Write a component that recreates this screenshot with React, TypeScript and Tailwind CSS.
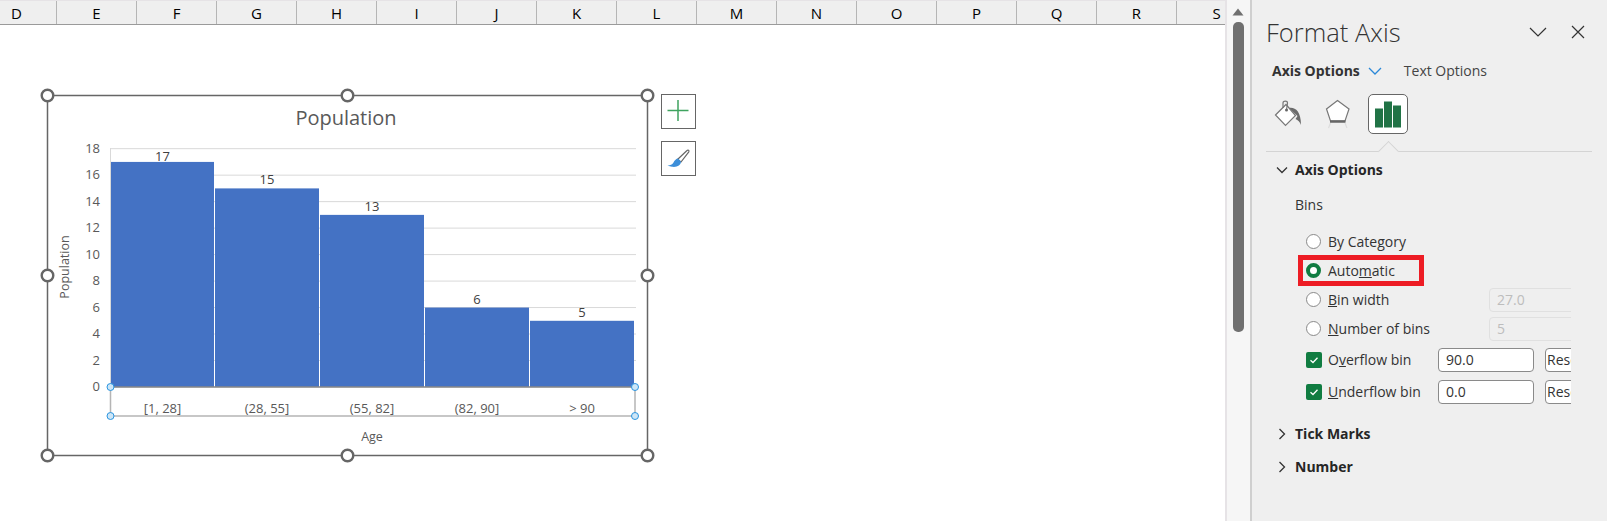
const columns = ["D", "E", "F", "G", "H", "I", "J", "K", "L", "M", "N", "O", "P", "Q", "R", "S"];

const baseY = 387;
const unit = 13.24;
const bars = [
  { x: 111, w: 103, value: 17, label: "[1, 28]" },
  { x: 215, w: 104, value: 15, label: "(28, 55]" },
  { x: 320, w: 104, value: 13, label: "(55, 82]" },
  { x: 425, w: 104, value: 6, label: "(82, 90]" },
  { x: 530, w: 104, value: 5, label: "> 90" },
];
const ticks = [0, 2, 4, 6, 8, 10, 12, 14, 16, 18];
const handles = [
  [47.5, 95.5], [347.5, 95.5], [647.5, 95.5],
  [47.5, 275.5], [647.5, 275.5],
  [47.5, 455.5], [347.5, 455.5], [647.5, 455.5],
];
const axisHandles = [
  [110.5, 387], [635, 387], [110.5, 416], [635, 416],
];

function Chart() {
  return (
    <svg
      width="620"
      height="380"
      viewBox="38 85 620 380"
      className="shrink-0"
      style={{ fontFamily: '"Open Sans", sans-serif' }}
    >
      <rect x="47.5" y="95.5" width="600" height="360" fill="#fff" stroke="#666" strokeWidth="1.5" />
      <text x="346" y="125" textAnchor="middle" fontSize="20" fill="#595959">Population</text>

      {ticks.map((t) => (
        <g key={t}>
          <line x1="110" x2="636" y1={baseY - t * unit} y2={baseY - t * unit} stroke="#d9d9d9" strokeWidth="1" />
          <text x="100" y={baseY - t * unit + 4} textAnchor="end" fontSize="13" fill="#595959">{t}</text>
        </g>
      ))}
      <line x1="110.5" x2="110.5" y1="148" y2="387" stroke="#d9d9d9" />

      {bars.map((b) => (
        <g key={b.label}>
          <rect x={b.x} y={baseY - b.value * unit} width={b.w} height={b.value * unit} fill="#4472c4" />
          <text x={b.x + b.w / 2} y={Math.max(baseY - b.value * unit - 4, 160.9)} textAnchor="middle" fontSize="13" fill="#404040">{b.value}</text>
          <text x={b.x + b.w / 2} y="413" textAnchor="middle" fontSize="13" fill="#595959">{b.label}</text>
        </g>
      ))}

      <line x1="110" x2="635" y1="387" y2="387" stroke="#888" strokeWidth="1.5" />
      <path d="M110.5 387V416H635V387" fill="none" stroke="#b5b5b5" strokeWidth="1.5" />
      {axisHandles.map(([x, y]) => (
        <circle key={`${x}-${y}`} cx={x} cy={y} r="3.5" fill="#cde6f7" stroke="#2b95e0" strokeWidth="1" />
      ))}

      <text x="372" y="441" textAnchor="middle" fontSize="12.5" fill="#595959">Age</text>
      <text transform="translate(69 267) rotate(-90)" textAnchor="middle" fontSize="12.5" fill="#595959">Population</text>

      {handles.map(([x, y]) => (
        <circle key={`${x}-${y}`} cx={x} cy={y} r="5.8" fill="#fff" stroke="#666" strokeWidth="2.4" />
      ))}
    </svg>
  );
}

function ChartButtons() {
  return (
    <div className="ml-[3px] mt-[9px] flex flex-col gap-[12px]">
      <div className="h-[35px] w-[35px] border border-[#666] bg-white">
        <svg width="33" height="33" viewBox="0 0 33 33">
          <path d="M5.5 15.5H26.5M16 5V26" stroke="#3fa35f" strokeWidth="1.5" fill="none" />
        </svg>
      </div>
      <div className="h-[35px] w-[35px] border border-[#666] bg-white">
        <svg width="33" height="33" viewBox="0 0 33 33">
          <path d="M25 8.5C26 7.5 27.5 8.500 26.800 9.800L19 20L15.500 17.500Z" fill="#fff" stroke="#666" strokeWidth="1.2" />
          <path d="M15.500 16.500C17 17 18.500 18.500 19 20C18.500 23 15.500 25.500 10 24.800C8.500 24.600 7 24.300 5.500 23.500C8.500 23.500 10 22.800 11.500 20.500C12.500 18.500 14 17 15.500 16.500Z" fill="#3d8fd9" />
        </svg>
      </div>
    </div>
  );
}

function Radio({ checked, label }: { checked?: boolean; label: React.ReactNode }) {
  return (
    <div className="flex h-[29px] items-center">
      {checked ? (
        <span className="h-[15px] w-[15px] rounded-full border-[4px] border-[#107c41] bg-white" />
      ) : (
        <span className="h-[15px] w-[15px] rounded-full border border-[#8a8a8a] bg-white" />
      )}
      <span className="ml-[7px] text-[#333]">{label}</span>
    </div>
  );
}

function BinRow({ label, value }: { label: React.ReactNode; value: string }) {
  return (
    <div className="flex h-[32px] items-center">
      <span className="flex h-[16px] w-[16px] items-center justify-center rounded-[2px] bg-[#107c41]">
        <svg width="12" height="12" viewBox="0 0 12 12">
          <path d="M2.500 6.200L5 8.500L9.500 3.800" fill="none" stroke="#fff" strokeWidth="1.300" />
        </svg>
      </span>
      <span className="ml-[6px] w-[110px] text-[#333]">{label}</span>
      <div className="flex h-[24px] w-[96px] items-center rounded-[4px] border border-[#8a8a8a] bg-white pl-[7px] text-[#333]">
        {value}
      </div>
      <div className="ml-[11px] flex h-[24px] w-[60px] shrink-0 items-center rounded-[4px] border border-[#8a8a8a] bg-white pl-[1px] text-[#333]">
        Reset
      </div>
    </div>
  );
}

function DisabledInput({ value }: { value: string }) {
  return (
    <div className="flex h-[24px] w-[120px] shrink-0 items-center rounded-[4px] border border-[#e0e0e0] pl-[7px] text-[#bdbdbd]">
      {value}
    </div>
  );
}

function PanelIcons() {
  return (
    <div className="ml-[16px] mt-[13px] flex gap-[10px]">
      <div className="h-[40px] w-[40px]">
        <svg width="40" height="40" viewBox="0 0 40 40">
          <path d="M21 14C27 13 33 17 33 31C32 28 30 26 27.500 25L29.500 22Z" fill="#6b6b6b" />
          <path d="M7.500 21L18 10.500L27.500 21.500L17.500 31.500Z" fill="#fff" stroke="#777" strokeWidth="1.200" />
          <path d="M15 14V9C15 6.500 19.500 6.500 19.500 9L18.500 16" fill="none" stroke="#777" strokeWidth="1.200" />
          <circle cx="18.500" cy="16" r="1.500" fill="#666" />
        </svg>
      </div>
      <div className="h-[40px] w-[40px]">
        <svg width="40" height="40" viewBox="0 0 40 40">
          <path d="M19.500 6.500L31 15L27 27H12.500L8.500 15Z" fill="#fff" stroke="#777" strokeWidth="1.200" />
          <path d="M12 27.500H27.500" stroke="#666" strokeWidth="2.500" />
          <path d="M12.500 29L10.500 34M27 29L29 34" stroke="#ddd" strokeWidth="1.200" />
        </svg>
      </div>
      <div className="h-[40px] w-[40px] rounded-[5px] border border-[#666] bg-white">
        <svg width="38" height="38" viewBox="0 0 38 38">
          <path d="M6 13.500H14V32.500H6ZM15 6.500H23V32.500H15ZM24 10.500H32V32.500H24Z" fill="#217346" />
        </svg>
      </div>
    </div>
  );
}

function SectionHead({ open, title }: { open?: boolean; title: string }) {
  return (
    <div className="flex items-center">
      <svg width="12" height="12" viewBox="0 0 12 12" className="ml-[24px]">
        {open ? (
          <path d="M1 3.500L6 8.500L11 3.500" fill="none" stroke="#333" strokeWidth="1.300" />
        ) : (
          <path d="M3.500 1L8.500 6L3.500 11" fill="none" stroke="#333" strokeWidth="1.300" />
        )}
      </svg>
      <span className="ml-[7px] font-bold text-[#262626]">{title}</span>
    </div>
  );
}

export default function App() {
  return (
    <div
      className="flex h-[521px] w-[1607px] overflow-hidden bg-white text-[14px] leading-[20px]"
      style={{ fontFamily: '"Open Sans", sans-serif' }}
    >
      {/* Sheet */}
      <div className="w-[1225px] shrink-0 overflow-hidden">
        <div className="-ml-[23px] flex h-[25px] border-b border-t border-b-[#9a9a9a] border-t-[#e6e3e6] bg-[#efefef]">
          {columns.map((c) => (
            <div
              key={c}
              className="flex w-[80px] shrink-0 items-center justify-center border-r border-[#b5b5b5] text-[15px] text-black"
            >
              {c}
            </div>
          ))}
        </div>
        <div className="ml-[38px] mt-[60px] flex items-start">
          <Chart />
          <ChartButtons />
        </div>
      </div>

      {/* Scrollbar */}
      <div className="flex w-[27px] shrink-0 flex-col items-center border-x-2 border-l-[#e6e3e6] border-r-[#cfcfcf] bg-[#f6f6f6] pr-[1px] pt-[8px]">
        <svg width="12" height="8" viewBox="0 0 12 8">
          <path d="M6 0.500L11.500 7.500H0.500Z" fill="#707070" />
        </svg>
        <div className="mt-[6px] h-[310px] w-[11px] rounded-[5px] bg-[#707070]" />
      </div>

      {/* Format pane */}
      <div className="min-w-0 flex-1 bg-[#efefef]">
        <div className="flex items-center pl-[14px] pr-[22px] pt-[16px]">
          <span className="text-[25.5px] font-light leading-[32px] text-[#333]">Format Axis</span>
          <svg width="18" height="10" viewBox="0 0 18 10" className="ml-auto">
            <path d="M1 1L9 9L17 1" fill="none" stroke="#333" strokeWidth="1.200" />
          </svg>
          <svg width="14" height="14" viewBox="0 0 14 14" className="ml-[24px]">
            <path d="M1 1L13 13M13 1L1 13" fill="none" stroke="#333" strokeWidth="1.200" />
          </svg>
        </div>

        <div className="ml-[20px] mt-[13px] flex items-center">
          <span className="font-bold text-[#333]">Axis Options</span>
          <svg width="14" height="8" viewBox="0 0 14 8" className="ml-[8px]">
            <path d="M1 1L7 7L13 1" fill="none" stroke="#2b88d8" strokeWidth="1.300" />
          </svg>
          <span className="ml-[22px] text-[#444]">Text Options</span>
        </div>

        <PanelIcons />

        <div className="relative ml-[14px] mr-[15px] mt-[17px] border-t border-[#d4d4d4]">
          <span className="absolute -top-[8px] left-[115px] h-[15px] w-[15px] rotate-45 border-l border-t border-[#d4d4d4] bg-[#efefef]" />
        </div>

        <div className="mt-[8px] w-[319px] overflow-hidden">
          <SectionHead open title="Axis Options" />
          <div className="ml-[43px] mt-[15px] text-[#333]">Bins</div>

          <div className="ml-[54px] mt-[12px] flex w-[303px] flex-col">
            <Radio label={<>By Cate<u>g</u>ory</>} />
            <div className="relative">
              <Radio checked label={<>Auto<u>m</u>atic</>} />
              <span className="absolute -left-[8px] top-[-1px] h-[31px] w-[126px] border-[5px] border-[#ed1c24]" />
            </div>
            <div className="flex items-center justify-between">
              <Radio label={<><u>B</u>in width</>} />
              <DisabledInput value="27.0" />
            </div>
            <div className="flex items-center justify-between">
              <Radio label={<><u>N</u>umber of bins</>} />
              <DisabledInput value="5" />
            </div>
          </div>

          <div className="ml-[54px] mt-[1px] w-[320px]">
            <BinRow label={<>O<u>v</u>erflow bin</>} value="90.0" />
            <BinRow label={<><u>U</u>nderflow bin</>} value="0.0" />
          </div>

          <div className="mt-[16px]">
            <SectionHead title="Tick Marks" />
          </div>
          <div className="mt-[13px]">
            <SectionHead title="Number" />
          </div>
        </div>
      </div>
    </div>
  );
}
